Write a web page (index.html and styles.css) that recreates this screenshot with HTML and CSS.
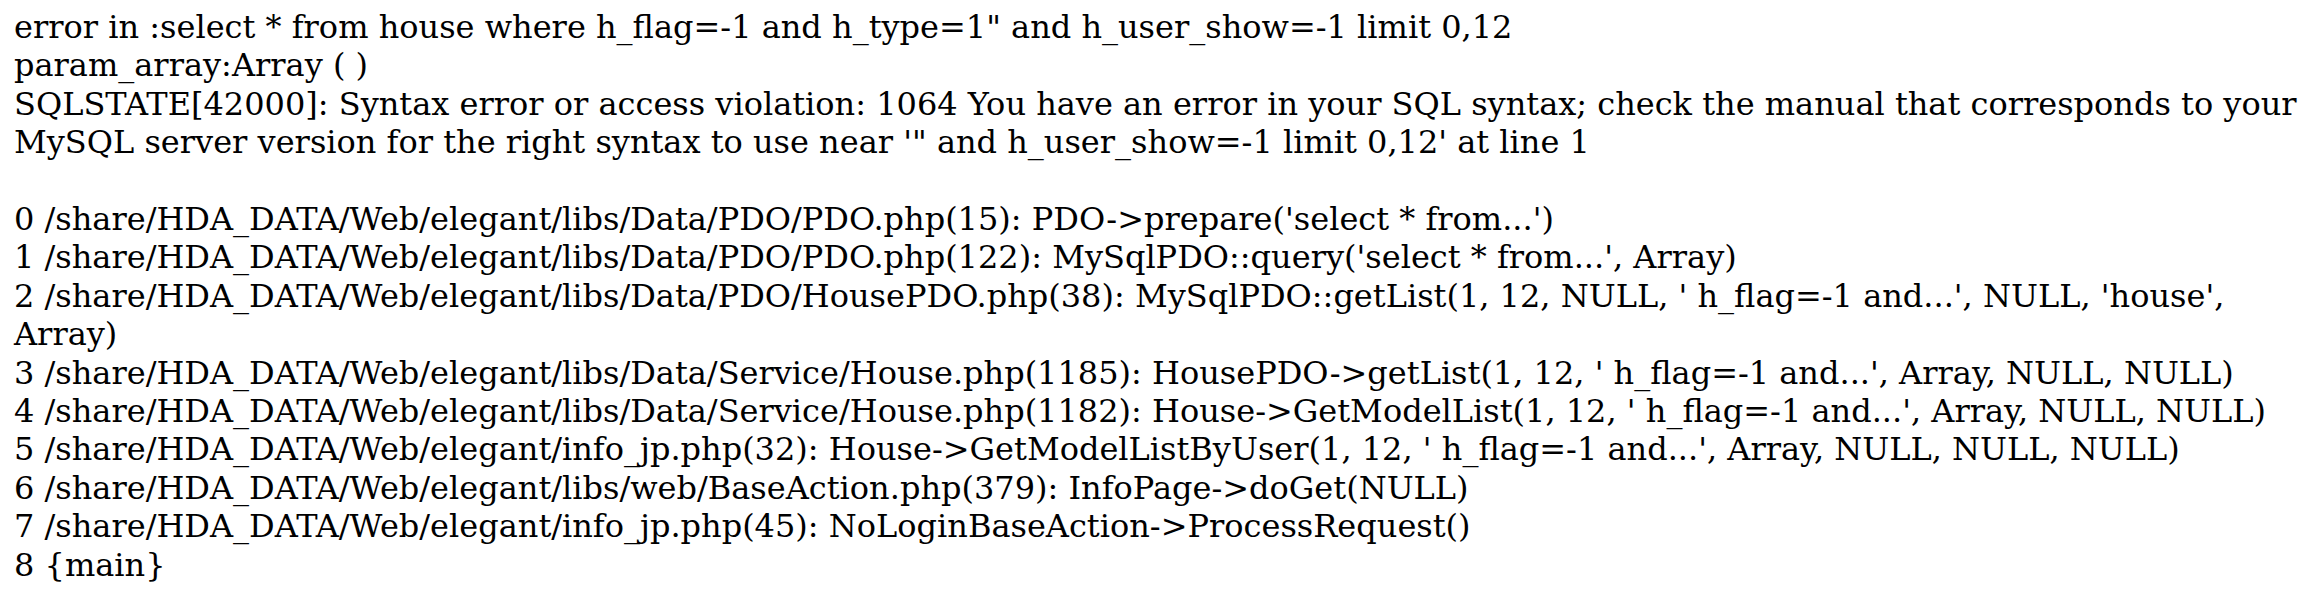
FILE: index.html
```html
<!DOCTYPE html>
<html>
<head>
<meta charset="utf-8">
<link rel="stylesheet" href="styles.css">
</head>
<body class="page">
<div class="trace">error in :select * from house where h_flag=-1 and h_type=1" and h_user_show=-1 limit 0,12<br>param_array:Array ( )<br>SQLSTATE[42000]: Syntax error or access violation: 1064 You have an error in your SQL syntax; check the manual that corresponds to your MySQL server version for the right syntax to use near '" and h_user_show=-1 limit 0,12' at line 1<br><br>0 /share/HDA_DATA/Web/elegant/libs/Data/PDO/PDO.php(15): PDO-&gt;prepare('select * from...')<br>1 /share/HDA_DATA/Web/elegant/libs/Data/PDO/PDO.php(122): MySqlPDO::query('select * from...', Array)<br>2 /share/HDA_DATA/Web/elegant/libs/Data/PDO/HousePDO.php(38): MySqlPDO::getList(1, 12, NULL, ' h_flag=-1 and...', NULL, 'house', Array)<br>3 /share/HDA_DATA/Web/elegant/libs/Data/Service/House.php(1185): HousePDO-&gt;getList(1, 12, ' h_flag=-1 and...', Array, NULL, NULL)<br>4 /share/HDA_DATA/Web/elegant/libs/Data/Service/House.php(1182): House-&gt;GetModelList(1, 12, ' h_flag=-1 and...', Array, NULL, NULL)<br>5 /share/HDA_DATA/Web/elegant/info_jp.php(32): House-&gt;GetModelListByUser(1, 12, ' h_flag=-1 and...', Array, NULL, NULL, NULL)<br>6 /share/HDA_DATA/Web/elegant/libs/web/BaseAction.php(379): InfoPage-&gt;doGet(NULL)<br>7 /share/HDA_DATA/Web/elegant/info_jp.php(45): NoLoginBaseAction-&gt;ProcessRequest()<br>8 {main}</div>
</body>
</html>
```
FILE: styles.css
```css
.page {
  margin: 8px;
  background: #ffffff;
  color: #000000;
}
.trace {
  padding-left: 6px;
  font-family: "DejaVu Serif", serif;
  font-size: 32px;
  line-height: 38.4px;
}
```
